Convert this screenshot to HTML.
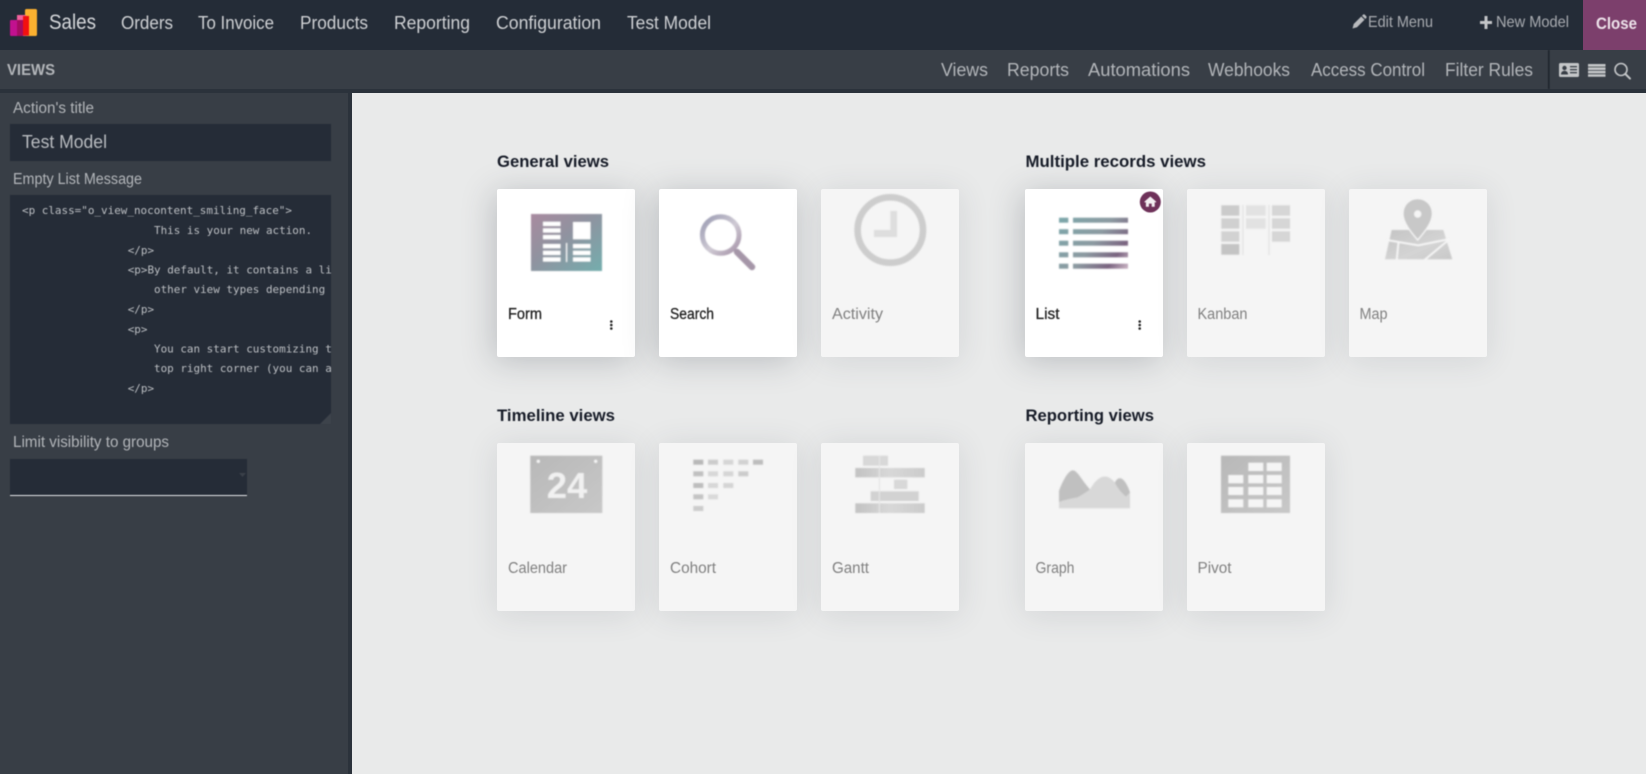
<!DOCTYPE html>
<html lang="en">
<head>
<meta charset="utf-8">
<title>Sales - Views</title>
<style>
html,body{margin:0;padding:0;width:1646px;height:774px;overflow:hidden;background:#e9eaea;}
.abs{position:absolute;}
.card{position:absolute;width:138px;height:168px;border-radius:2px;}
.on{background:#fff;box-shadow:-3px 4px 32px rgba(50,60,70,.25);}
.off{background:#f5f5f5;box-shadow:0 3px 32px rgba(50,60,70,.12);}
svg{position:absolute;left:0;top:0;filter:blur(.4px);}
text{font-family:"Liberation Sans",sans-serif;}
.nav{fill:#cfd1d4;font-size:18px;}
.sub{fill:#b3b6ba;font-size:18px;}
.lab{fill:#b3b6ba;font-size:15.5px;}
.mono{font-family:"DejaVu Sans Mono","Liberation Mono",monospace;font-size:10.95px;fill:#bcbfc3;}
.h{fill:#171c28;font-size:16.5px;font-weight:bold;}
.a{fill:#1c1c1c;font-size:15.5px;stroke:#1c1c1c;stroke-width:.25px;}
.d{fill:#808080;font-size:15.5px;}
</style>
</head>
<body>
<div class="abs" style="left:0;top:0;width:1646px;height:50px;background:#242c37"></div>
<div class="abs" style="left:1583px;top:0;width:63px;height:50px;background:#7c3f6c"></div>
<div class="abs" style="left:0;top:50px;width:1646px;height:39px;background:#383e46"></div>
<div class="abs" style="left:0;top:89px;width:1646px;height:4px;background:#2b323b"></div>
<div class="abs" style="left:0;top:93px;width:348px;height:681px;background:#383e46"></div>
<div class="abs" style="left:348px;top:93px;width:4px;height:681px;background:#2b323b"></div>

<div class="card on" style="left:497px;top:189px"></div>
<div class="card on" style="left:659px;top:189px"></div>
<div class="card off" style="left:821px;top:189px"></div>
<div class="card on" style="left:1025px;top:189px"></div>
<div class="card off" style="left:1187px;top:189px"></div>
<div class="card off" style="left:1349px;top:189px"></div>
<div class="card off" style="left:497px;top:443px"></div>
<div class="card off" style="left:659px;top:443px"></div>
<div class="card off" style="left:821px;top:443px"></div>
<div class="card off" style="left:1025px;top:443px"></div>
<div class="card off" style="left:1187px;top:443px"></div>

<svg width="1646" height="774" viewBox="0 0 1646 774" xmlns="http://www.w3.org/2000/svg">
<defs>
<linearGradient id="gForm" x1="0" y1="0" x2="1" y2="1"><stop offset="0" stop-color="#a88a9f"/><stop offset=".45" stop-color="#8f93a0"/><stop offset="1" stop-color="#74adad"/></linearGradient>
<linearGradient id="gList" gradientUnits="userSpaceOnUse" x1="1059" y1="217" x2="1128" y2="269"><stop offset="0" stop-color="#7ba7aa"/><stop offset=".5" stop-color="#8c9aa1"/><stop offset=".8" stop-color="#7a6480"/><stop offset="1" stop-color="#cdb7c6"/></linearGradient>
<linearGradient id="gSearch" x1="0" y1="0" x2="1" y2="1"><stop offset="0" stop-color="#9a9bb2"/><stop offset=".55" stop-color="#cfcad4"/><stop offset="1" stop-color="#a491a6"/></linearGradient>
<linearGradient id="gGrey" x1="0" y1="0" x2="1" y2="1"><stop offset="0" stop-color="#c4c4c4"/><stop offset=".6" stop-color="#d4d4d4"/><stop offset="1" stop-color="#c8c8c8"/></linearGradient>
<linearGradient id="gCal" x1="0" y1="0" x2="1" y2="1"><stop offset="0" stop-color="#b8b8b8"/><stop offset="1" stop-color="#c8c8c8"/></linearGradient>
<linearGradient id="gGantt" x1="0" y1="0" x2="1" y2="0"><stop offset="0" stop-color="#c2c2c2"/><stop offset=".5" stop-color="#d8d8d8"/><stop offset="1" stop-color="#cbcbcb"/></linearGradient>
<clipPath id="ta"><rect x="10" y="195" width="321" height="229"/></clipPath>
<filter id="soft" x="-5%" y="-5%" width="110%" height="110%"><feGaussianBlur stdDeviation=".45"/></filter>
</defs>

<!-- logo -->
<rect x="25" y="9" width="12" height="27" rx="1.5" fill="#fbb130"/>
<rect x="17" y="15" width="9" height="21" fill="#f2629e"/>
<rect x="23" y="16" width="6" height="19.5" fill="#f21010"/>
<rect x="10" y="20" width="8" height="16" rx="1" fill="#c2118f"/>
<rect x="17" y="20" width="6" height="16" fill="#a50c62"/>

<!-- top menu -->
<text x="49" y="29" fill="#d7d9dc" font-size="21" textLength="47" lengthAdjust="spacingAndGlyphs">Sales</text>
<text class="nav" x="121" y="29" textLength="52" lengthAdjust="spacingAndGlyphs">Orders</text>
<text class="nav" x="198" y="29" textLength="76" lengthAdjust="spacingAndGlyphs">To Invoice</text>
<text class="nav" x="300" y="29" textLength="68" lengthAdjust="spacingAndGlyphs">Products</text>
<text class="nav" x="394" y="29" textLength="76" lengthAdjust="spacingAndGlyphs">Reporting</text>
<text class="nav" x="496" y="29" textLength="105" lengthAdjust="spacingAndGlyphs">Configuration</text>
<text class="nav" x="627" y="29" textLength="84" lengthAdjust="spacingAndGlyphs">Test Model</text>

<!-- edit menu -->
<path d="M1352.5 28.500l1.200-4.500 7.500-7.500 3.300 3.300-7.500 7.500z M1362 15.700l1-1a1.300 1.300 0 0 1 1.800 0l1.500 1.500a1.300 1.300 0 0 1 0 1.800l-1 1z" fill="#b8babd"/>
<text x="1368" y="27" fill="#a9acb1" font-size="16" textLength="65" lengthAdjust="spacingAndGlyphs">Edit Menu</text>
<path d="M1484.5 16h3v5h4.500v3h-4.500v5h-3v-5H1480v-3h4.500z" fill="#c3c5c8"/>
<text x="1496" y="27" fill="#a9acb1" font-size="16" textLength="73" lengthAdjust="spacingAndGlyphs">New Model</text>
<text x="1596" y="29" fill="#eee3eb" font-size="17" font-weight="bold" textLength="41" lengthAdjust="spacingAndGlyphs">Close</text>

<!-- subheader -->
<text x="7" y="75" fill="#b3b6ba" font-size="15.5" font-weight="bold" textLength="48" lengthAdjust="spacingAndGlyphs">VIEWS</text>
<text class="sub" x="941" y="76" textLength="47" lengthAdjust="spacingAndGlyphs">Views</text>
<text class="sub" x="1007" y="76" textLength="62" lengthAdjust="spacingAndGlyphs">Reports</text>
<text class="sub" x="1088" y="76" textLength="102" lengthAdjust="spacingAndGlyphs">Automations</text>
<text class="sub" x="1208" y="76" textLength="82" lengthAdjust="spacingAndGlyphs">Webhooks</text>
<text class="sub" x="1311" y="76" textLength="114" lengthAdjust="spacingAndGlyphs">Access Control</text>
<text class="sub" x="1445" y="76" textLength="88" lengthAdjust="spacingAndGlyphs">Filter Rules</text>
<rect x="1548" y="50" width="1.6" height="39" fill="#1f252d"/>
<!-- id card -->
<rect x="1559" y="63" width="20" height="14" rx="1.5" fill="#c4c6c8"/>
<circle cx="1564.5" cy="68" r="2.2" fill="#383e46"/>
<path d="M1561 74.500c0-2.600 1.500-3.600 3.500-3.600s3.500 1 3.500 3.600z" fill="#383e46"/>
<rect x="1570" y="66" width="7" height="1.3" fill="#383e46"/><rect x="1570" y="69" width="7" height="1.3" fill="#383e46"/><rect x="1570" y="72" width="7" height="1.3" fill="#383e46"/>
<!-- list -->
<path d="M1588 64h17.500v2.600H1588zM1588 67.400h17.500v2.600H1588zM1588 70.800h17.500v2.600H1588zM1588 74.200h17.500v2.600H1588z" fill="#c4c6c8"/>
<!-- search -->
<circle cx="1621" cy="69.500" r="6" fill="none" stroke="#c4c6c8" stroke-width="1.6"/>
<path d="M1625.4 74l4.600 4.600" stroke="#c4c6c8" stroke-width="2" stroke-linecap="round"/>

<!-- sidebar -->
<text class="lab" x="13" y="113" textLength="81" lengthAdjust="spacingAndGlyphs">Action's title</text>
<rect x="10" y="124" width="321" height="37" fill="#252c37"/>
<text x="22" y="148" fill="#b9bcc0" font-size="18" textLength="85" lengthAdjust="spacingAndGlyphs">Test Model</text>
<text class="lab" x="13" y="184" textLength="129" lengthAdjust="spacingAndGlyphs">Empty List Message</text>
<rect x="10" y="195" width="321" height="229" fill="#252c37"/>
<g clip-path="url(#ta)">
<text class="mono" x="22" y="214">&lt;p class="o_view_nocontent_smiling_face"&gt;</text>
<text class="mono" x="154" y="234">This is your new action.</text>
<text class="mono" x="127.7" y="254">&lt;/p&gt;</text>
<text class="mono" x="127.7" y="273.5">&lt;p&gt;By default, it contains a list and a form view and</text>
<text class="mono" x="154" y="293">other view types depending on the options you chose</text>
<text class="mono" x="127.7" y="313">&lt;/p&gt;</text>
<text class="mono" x="127.7" y="333">&lt;p&gt;</text>
<text class="mono" x="154" y="352.5">You can start customizing these screens by clicking</text>
<text class="mono" x="154" y="372">top right corner (you can also customize this help</text>
<text class="mono" x="127.7" y="392">&lt;/p&gt;</text>
</g>
<path d="M331 413v11h-11z" fill="#3d434b"/>
<text class="lab" x="13" y="447" textLength="156" lengthAdjust="spacingAndGlyphs">Limit visibility to groups</text>
<rect x="10" y="459" width="237" height="36" fill="#252c37"/>
<rect x="10" y="495" width="237" height="1" fill="#e6e7e8"/>
<path d="M239 473h7l-3.500 4z" fill="#3a4049"/>

<!-- headings -->
<text class="h" x="497" y="167" textLength="112" lengthAdjust="spacingAndGlyphs">General views</text>
<text class="h" x="1025.5" y="167" textLength="180.500" lengthAdjust="spacingAndGlyphs">Multiple records views</text>
<text class="h" x="497" y="421" textLength="118" lengthAdjust="spacingAndGlyphs">Timeline views</text>
<text class="h" x="1025.5" y="421" textLength="128.500" lengthAdjust="spacingAndGlyphs">Reporting views</text>

<!-- labels -->
<text class="a" x="508" y="319" textLength="34" lengthAdjust="spacingAndGlyphs">Form</text>
<text class="a" x="670" y="319" textLength="44" lengthAdjust="spacingAndGlyphs">Search</text>
<text class="d" x="832" y="319" textLength="51" lengthAdjust="spacingAndGlyphs">Activity</text>
<text class="a" x="1035.5" y="319" textLength="24" lengthAdjust="spacingAndGlyphs">List</text>
<text class="d" x="1197.5" y="319" textLength="50" lengthAdjust="spacingAndGlyphs">Kanban</text>
<text class="d" x="1359.5" y="319" textLength="28" lengthAdjust="spacingAndGlyphs">Map</text>
<text class="d" x="508" y="573" textLength="59" lengthAdjust="spacingAndGlyphs">Calendar</text>
<text class="d" x="670" y="573" textLength="46" lengthAdjust="spacingAndGlyphs">Cohort</text>
<text class="d" x="832" y="573" textLength="37" lengthAdjust="spacingAndGlyphs">Gantt</text>
<text class="d" x="1035.5" y="573" textLength="39" lengthAdjust="spacingAndGlyphs">Graph</text>
<text class="d" x="1197.5" y="573" textLength="34" lengthAdjust="spacingAndGlyphs">Pivot</text>

<!-- kebabs -->
<g fill="#222"><circle cx="611.3" cy="321.5" r="1.3"/><circle cx="611.3" cy="325" r="1.3"/><circle cx="611.3" cy="328.5" r="1.3"/>
<circle cx="1139.7" cy="321.5" r="1.3"/><circle cx="1139.7" cy="325" r="1.3"/><circle cx="1139.7" cy="328.5" r="1.3"/></g>

<!-- home badge -->
<circle cx="1150.3" cy="202" r="10.5" fill="#6e3159"/>
<path d="M1150.3 196.5l6 5.200-.8.900-.8-.6v4.800h-3v-3.200h-2.800v3.200h-3v-4.800l-.8.6-.8-.9z" fill="#f3eef1"/>

<g filter="url(#soft)">
<!-- form icon -->
<rect x="531" y="214" width="71" height="57" fill="url(#gForm)"/>
<g fill="#fff">
<rect x="543" y="221.7" width="17.5" height="4.3"/><rect x="543" y="228.3" width="17.5" height="4.3"/><rect x="543" y="235" width="17.5" height="4.3"/>
<rect x="543" y="244" width="17.5" height="4.3"/><rect x="543" y="250.7" width="17.5" height="4.3"/><rect x="543" y="257.3" width="17.5" height="4.3"/>
<rect x="573" y="222" width="17.5" height="17.3"/>
<rect x="573" y="244" width="17.5" height="4.3"/><rect x="573" y="250.7" width="17.5" height="4.3"/><rect x="573" y="257.3" width="17.5" height="4.3"/>
<rect x="566" y="243" width="1.2" height="19"/>
</g>

<!-- search icon -->
<circle cx="720.7" cy="235" r="18.3" fill="none" stroke="url(#gSearch)" stroke-width="5"/>
<path d="M737 252L752 267" stroke="#a596a8" stroke-width="6.500" stroke-linecap="round"/>

<!-- activity icon -->
<circle cx="890.3" cy="230" r="32.7" fill="none" stroke="#cdcdcd" stroke-width="6.6"/>
<path d="M890.3 211h6.700v26h-23v-7h16.300z" fill="#dedede"/>

<!-- list icon -->
<g fill="url(#gList)">
<rect x="1059" y="217.7" width="9.3" height="5"/><rect x="1073" y="217.7" width="55" height="5"/>
<rect x="1059" y="229.2" width="9.3" height="5"/><rect x="1073" y="229.2" width="55" height="5"/>
<rect x="1059" y="240.7" width="9.3" height="5"/><rect x="1073" y="240.7" width="55" height="5"/>
<rect x="1059" y="252.3" width="9.3" height="5"/><rect x="1073" y="252.3" width="55" height="5"/>
<rect x="1059" y="263.7" width="9.3" height="5"/><rect x="1073" y="263.7" width="55" height="5"/>
</g>

<!-- kanban icon -->
<rect x="1221.3" y="205.3" width="18" height="10.4" fill="#cbcbcb"/><rect x="1221.3" y="218.3" width="18" height="10.4" fill="#d0d0d0"/><rect x="1221.3" y="231.3" width="18" height="10.4" fill="#d2d2d2"/><rect x="1221.3" y="244" width="18" height="10.7" fill="#c4c4c4"/>
<rect x="1272" y="205.3" width="18" height="10.4" fill="#d6d6d6"/><rect x="1272" y="218.3" width="18" height="10.4" fill="#d6d6d6"/><rect x="1272" y="231.3" width="18" height="10.4" fill="#d6d6d6"/>
<rect x="1246" y="205.3" width="19.7" height="10.4" fill="#e2e2e2"/><rect x="1246" y="218.3" width="19.7" height="10.4" fill="#e2e2e2"/>
<rect x="1242" y="205" width="1.6" height="50" fill="#e6e6e6"/><rect x="1268.2" y="205" width="1.6" height="50" fill="#e6e6e6"/>

<!-- map icon -->
<path d="M1391.7 230H1443.3L1452.3 259.3H1385z" fill="url(#gGrey)"/>
<path d="M1386.7 240L1418.3 245.3L1449.7 239M1398.5 242.5L1396.7 260M1449.7 239L1424.5 260" fill="none" stroke="#f5f5f5" stroke-width="2"/>
<path d="M1417.7 198.5c8.500 0 14.800 6.800 14.800 15.200 0 9-8.500 19-14.800 26.300-6.300-7.300-14.800-17.300-14.800-26.300 0-8.400 6.300-15.200 14.800-15.200z" fill="#c8c8c8" stroke="#f5f5f5" stroke-width="1.4"/>
<circle cx="1417.7" cy="214" r="3.7" fill="#f5f5f5"/>

<!-- calendar icon -->
<rect x="530.3" y="455.7" width="72" height="57.3" fill="url(#gCal)"/>
<circle cx="538.3" cy="461.3" r="1.7" fill="#f5f5f5"/><circle cx="595.7" cy="461.3" r="1.7" fill="#f5f5f5"/>
<text x="546.7" y="498" fill="#f1f1f1" font-size="36.5" font-weight="bold" textLength="40.6" lengthAdjust="spacingAndGlyphs">24</text>

<!-- cohort icon -->
<rect x="693.3" y="459.7" width="10" height="5" fill="#b8b8b8"/><rect x="708" y="459.7" width="10" height="5" fill="#cccccc"/><rect x="723.3" y="459.7" width="10" height="5" fill="#d6d6d6"/><rect x="738.3" y="459.7" width="10" height="5" fill="#d2d2d2"/><rect x="753" y="459.7" width="10" height="5" fill="#bdbdbd"/>
<rect x="693.3" y="471.3" width="10" height="5" fill="#c0c0c0"/><rect x="708" y="471.3" width="10" height="5" fill="#d8d8d8"/><rect x="723.3" y="471.3" width="10" height="5" fill="#d6d6d6"/><rect x="738.3" y="471.3" width="10" height="5" fill="#cccccc"/>
<rect x="693.3" y="483" width="10" height="5" fill="#bdbdbd"/><rect x="708" y="483" width="10" height="5" fill="#d8d8d8"/><rect x="723.3" y="483" width="10" height="5" fill="#d4d4d4"/>
<rect x="693.3" y="494.3" width="10" height="5" fill="#c4c4c4"/><rect x="708" y="494.3" width="10" height="5" fill="#dadada"/>
<rect x="693.3" y="506" width="10" height="5" fill="#cccccc"/>

<!-- gantt icon -->
<rect x="863" y="455.7" width="25" height="10" fill="#d8d8d8"/>
<rect x="855.3" y="468" width="69.4" height="9.3" fill="url(#gGantt)"/>
<rect x="894" y="479.7" width="13.3" height="9.3" fill="#d8d8d8"/>
<rect x="870.7" y="491.3" width="48" height="9.7" fill="#d2d2d2"/>
<rect x="855.3" y="503.3" width="69.4" height="9.7" fill="url(#gGantt)"/>
<rect x="878.8" y="456" width="1.2" height="57" fill="#e6e6e6"/>

<!-- graph icon -->
<path d="M1059 508.300V491c3-8 8-19 13-20.500 5-1 9 9 18 19 4-7 9-13 15-13 4 0 7 3 10 6 1-3 3-4.500 5-4.500 4 0 8 8 10 14v16.300z" fill="#d8d8d8"/>
<path d="M1059 502V491c3-8 8-19 13-20.500 5-1 9 9 18 19-6 4-9 6-13 8-6 1-12 2-18 4.500z" fill="#c0c0c0"/>
<path d="M1115 483c1-3 3-4.500 5-4.500 4 0 8 8 10 14l-4 4c-4-3-8-8-11-13.500z" fill="#c0c0c0"/>

<!-- pivot icon -->
<rect x="1221" y="455.7" width="69" height="57.3" fill="url(#gCal)"/>
<g fill="#f5f5f5">
<rect x="1248.3" y="462.7" width="15" height="8.3"/><rect x="1266.7" y="462.7" width="15" height="8.3"/>
<rect x="1228.3" y="475" width="15" height="8.3"/><rect x="1248.3" y="475" width="15" height="8.3"/><rect x="1266.7" y="475" width="15" height="8.3"/>
<rect x="1228.3" y="487" width="15" height="8"/><rect x="1248.3" y="487" width="15" height="8"/><rect x="1266.7" y="487" width="15" height="8"/>
<rect x="1228.3" y="499.3" width="15" height="8"/><rect x="1248.3" y="499.3" width="15" height="8"/><rect x="1266.7" y="499.3" width="15" height="8"/>
</g>
</g>
</svg>
</body>
</html>
